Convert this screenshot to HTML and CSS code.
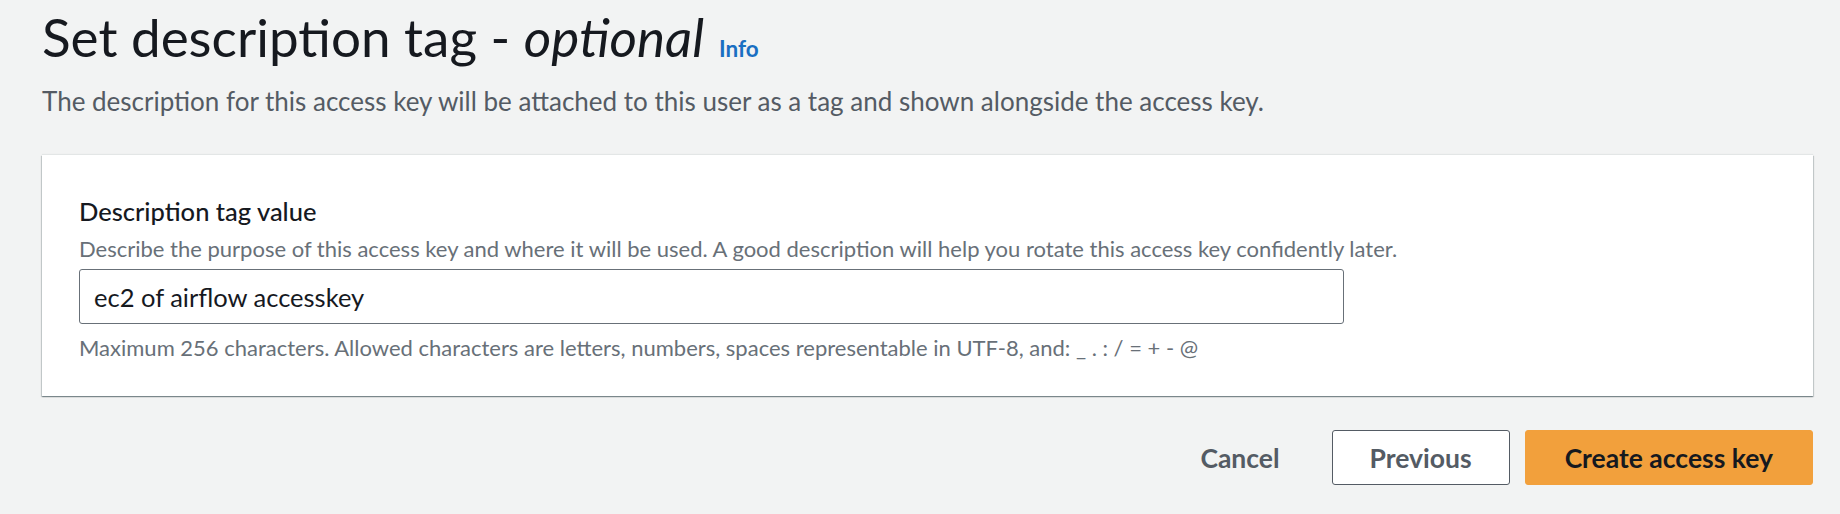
FILE: index.html
```html
<!DOCTYPE html>
<html lang="en">
<head>
<meta charset="utf-8">
<title>Set description tag</title>
<link rel="stylesheet" href="styles.css">
</head>
<body>
<div class="page">
  <header class="head">
    <h1 class="title">Set description tag - <i>optional</i><a class="info" href="#">Info</a></h1>
    <p class="desc">The description for this access key will be attached to this user as a tag and shown alongside the access key.</p>
  </header>
  <section class="card">
    <div class="field">
      <label class="label" for="tag">Description tag value</label>
      <div class="constraint">Describe the purpose of this access key and where it will be used. A good description will help you rotate this access key confidently later.</div>
      <input class="input" id="tag" type="text" value="ec2 of airflow accesskey">
      <div class="hint">Maximum 256 characters. Allowed characters are letters, numbers, spaces representable in UTF-8, and: _ . : / = + - @</div>
    </div>
  </section>
  <div class="actions">
    <button class="btn btn-link" type="button">Cancel</button>
    <button class="btn btn-normal" type="button">Previous</button>
    <button class="btn btn-primary" type="button">Create access key</button>
  </div>
</div>
</body>
</html>
```
FILE: styles.css
```css
* { box-sizing: border-box; }
html, body { margin: 0; padding: 0; }
body {
  background: #f2f3f3;
  font-family: Lato, "Open Sans", sans-serif;
  color: #16191f;
}
.page { padding: 0 27px 0 42px; }
.head { padding-top: 6px; }
.title {
  margin: 0;
  font-size: 53px;
  line-height: 62px;
  font-weight: 400;
  color: #16191f;
}
.title i { font-style: italic; }
.info {
  margin-left: 15px;
  font-size: 22.5px;
  font-weight: 700;
  color: #1a6fc2;
  text-decoration: none;
}
.desc {
  margin: 4px 0 0;
  font-size: 26px;
  line-height: 34px;
  color: #545b64;
}
.card {
  margin-top: 37px;
  background: #fff;
  padding: 36px 37px 33px;
  box-shadow: 0 1px 1px 0 rgba(0,28,36,.3), 1px 1px 1px 0 rgba(0,28,36,.15), -1px 1px 1px 0 rgba(0,28,36,.15), 0 -1px 1px 0 rgba(0,28,36,.06);
}
.field { display: flex; flex-direction: column; align-items: flex-start; }
.label { font-size: 25.5px; line-height: 41px; font-weight: 500; color: #16191f; }
.constraint { margin-top: 2px; font-size: 22px; line-height: 30px; color: #687078; }
.input {
  margin-top: 5px;
  width: 1265px;
  height: 55px;
  border: 1.5px solid #687078;
  border-radius: 3px;
  padding: 0 14px;
  font-family: inherit;
  font-size: 25.5px;
  color: #16191f;
  background: #fff;
  outline: none;
}
.hint { margin-top: 9px; font-size: 22px; line-height: 30px; color: #687078; }
.actions {
  display: flex;
  justify-content: flex-end;
  gap: 15px;
  margin-top: 34px;
}
.btn {
  height: 55px;
  padding: 0 39px;
  border-radius: 3px;
  font-family: inherit;
  font-size: 26.5px;
  font-weight: 700;
  cursor: pointer;
}
.btn-link { background: transparent; border: 1.5px solid transparent; color: #545b64; padding: 0 36px 0 40px; }
.btn-normal { background: #fff; border: 1.5px solid #545b64; color: #545b64; padding: 0 37px; }
.btn-primary { background: #f2a03c; border: 1.5px solid #f2a03c; color: #16191f; }
```
